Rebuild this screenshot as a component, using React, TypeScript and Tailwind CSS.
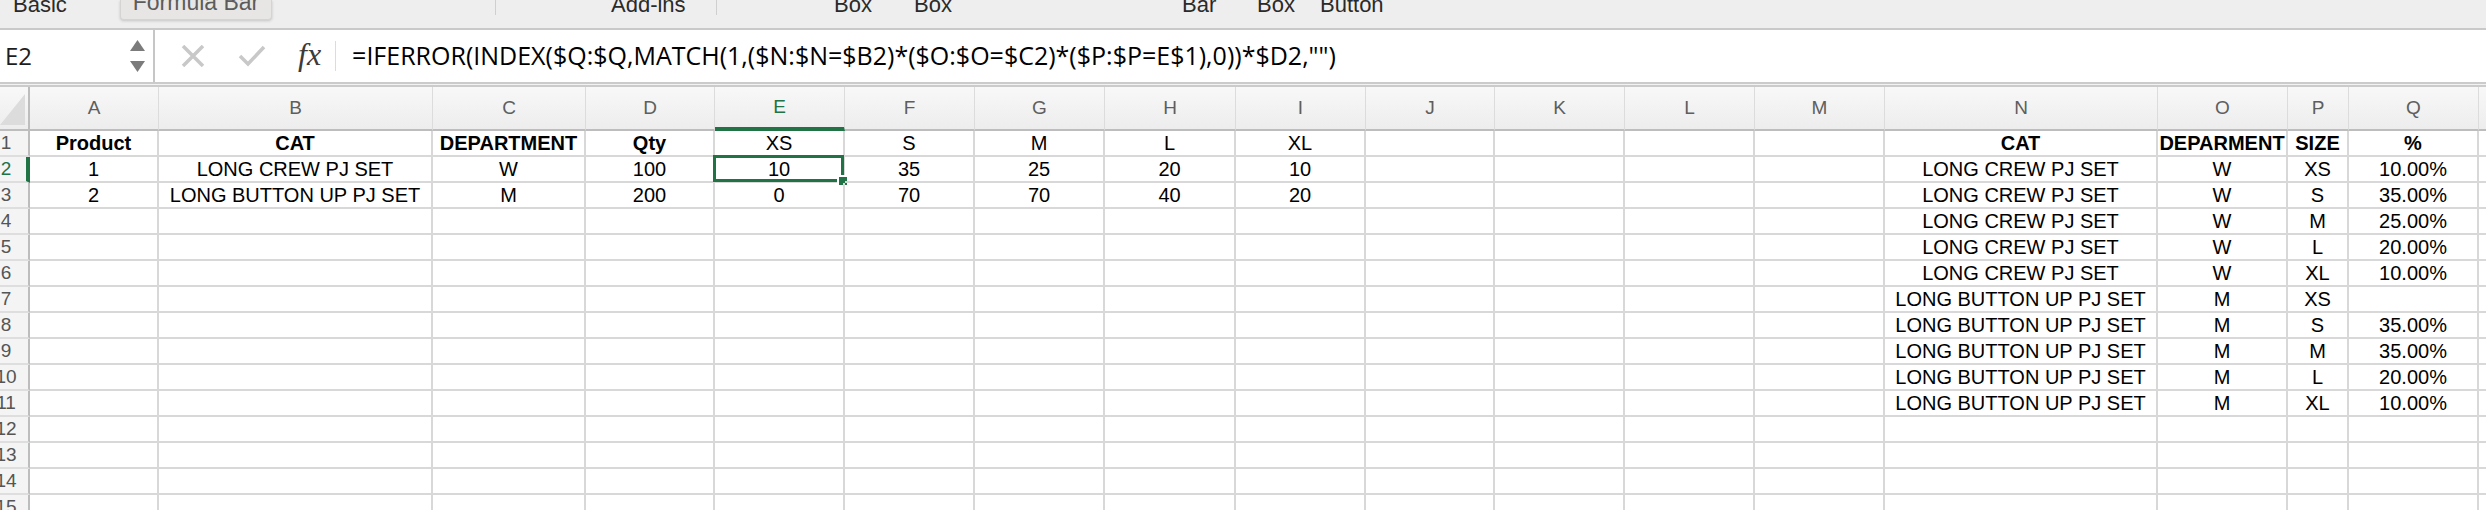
import React from 'react';

const letters = ['A', 'B', 'C', 'D', 'E', 'F', 'G', 'H', 'I', 'J', 'K', 'L', 'M', 'N', 'O', 'P', 'Q', 'R'];

// A..I block on the left
const leftTable = [
    ['Product', 'CAT', 'DEPARTMENT', 'Qty', 'XS', 'S', 'M', 'L', 'XL'],
    ['1', 'LONG CREW PJ SET', 'W', '100', '10', '35', '25', '20', '10'],
    ['2', 'LONG BUTTON UP PJ SET', 'M', '200', '0', '70', '70', '40', '20'],
];

// N..Q lookup block
const rightTable = [
    ['CAT', 'DEPARMENT', 'SIZE', '%'],
    ['LONG CREW PJ SET', 'W', 'XS', '10.00%'],
    ['LONG CREW PJ SET', 'W', 'S', '35.00%'],
    ['LONG CREW PJ SET', 'W', 'M', '25.00%'],
    ['LONG CREW PJ SET', 'W', 'L', '20.00%'],
    ['LONG CREW PJ SET', 'W', 'XL', '10.00%'],
    ['LONG BUTTON UP PJ SET', 'M', 'XS', ''],
    ['LONG BUTTON UP PJ SET', 'M', 'S', '35.00%'],
    ['LONG BUTTON UP PJ SET', 'M', 'M', '35.00%'],
    ['LONG BUTTON UP PJ SET', 'M', 'L', '20.00%'],
    ['LONG BUTTON UP PJ SET', 'M', 'XL', '10.00%'],
];

const gridCols =
    'grid grid-cols-[30px_129px_274px_153px_129px_130px_130px_130px_131px_130px_129px_130px_130px_130px_273px_130px_61px_130px_130px]';

function cellValue(r: number, c: number) {
    if (r < leftTable.length && c < 9) return leftTable[r][c];
    if (r < rightTable.length && c >= 13 && c <= 16) return rightTable[r][c - 13];
    return '';
}

function isBold(r: number, c: number) {
    return r === 0 && (c < 4 || (c >= 13 && c <= 16));
}

function Toolbar() {
    return (
        <div className="relative h-[30px] bg-[#eeeeee] border-b-2 border-[#c9c9c9] flex items-start pl-[13px] text-[22px] leading-[22px] text-[#2a2a2a] overflow-hidden">
            <div className="w-[482px] -mt-[6px]">Basic</div>
            <div className="w-[116px] h-[15px] border-l border-[#cfcfcf]" />
            <div className="w-[105px] -mt-[6px]">Add-ins</div>
            <div className="w-[118px] h-[15px] border-l border-[#cfcfcf]" />
            <div className="w-[80px] -mt-[6px]">Box</div>
            <div className="w-[268px] -mt-[6px]">Box</div>
            <div className="w-[75px] -mt-[6px]">Bar</div>
            <div className="w-[63px] -mt-[6px]">Box</div>
            <div className="-mt-[6px]">Button</div>

            {/* tooltip hovering over the ribbon */}
            <div className="absolute left-[120px] top-0 w-[152px] h-[20px] bg-[#e8e6e4] border border-t-0 border-[#d6d4d2] rounded-b-[4px] shadow-[0_1px_3px_rgba(0,0,0,0.18)] flex justify-center">
                <span className="text-[23px] leading-[22px] -mt-[9px] text-[#5c5c5c]">Formula Bar</span>
            </div>
        </div>
    );
}

function FormulaBar() {
    return (
        <div className="h-[52px] bg-white flex items-stretch">
            {/* Name box */}
            <div className="w-[155px] border-r-2 border-[#c6c6c6] flex items-center justify-between pl-[5px] pr-[8px]">
                <span className="text-[24px] text-[#1d1d1d] font-['Open_Sans',sans-serif]">E2</span>
                <div className="flex flex-col gap-[10px]">
                    <svg width="15" height="11" viewBox="0 0 15 11">
                        <path d="M7.5 0 L15 11 L0 11 Z" fill="#7b7b7b" />
                    </svg>
                    <svg width="15" height="11" viewBox="0 0 15 11">
                        <path d="M0 0 L15 0 L7.5 11 Z" fill="#7b7b7b" />
                    </svg>
                </div>
            </div>

            {/* cancel / enter / fx */}
            <div className="flex items-center pl-[26px]">
                <svg width="24" height="22" viewBox="0 0 24 22">
                    <path d="M2 1 L22 21 M22 1 L2 21" stroke="#c8c8c8" strokeWidth="3.5" />
                </svg>
                <svg className="ml-[33px]" width="28" height="22" viewBox="0 0 28 22">
                    <path d="M2 11 L10 19 L26 2" stroke="#c8c8c8" strokeWidth="3.5" fill="none" />
                </svg>
                <span className="ml-[32px] text-[32px] italic text-[#3b3b3b] font-['Liberation_Serif',serif] leading-none -mt-[4px]">
                    fx
                </span>
                <div className="ml-[14px] w-px h-[30px] bg-[#dcdcdc]" />
                <span className="ml-[16px] text-[25px] text-black font-['Open_Sans',sans-serif] whitespace-nowrap">
                    =IFERROR(INDEX($Q:$Q,MATCH(1,($N:$N=$B2)*($O:$O=$C2)*($P:$P=E$1),0))*$D2,"")
                </span>
            </div>
        </div>
    );
}

function ColumnHeaders() {
    return (
        <div className={`${gridCols} h-[44px]`}>
            <div className="relative bg-linear-to-b from-[#f8f8f8] to-[#ededed] border-r-2 border-b-2 border-[#bdbdbd]">
                <svg className="absolute left-0 bottom-[4px]" width="25" height="31" viewBox="0 0 25 31">
                    <path d="M25 0 L25 31 L0 31 Z" fill="#dcdcdc" />
                </svg>
            </div>
            {letters.map((l, i) => (
                <div
                    key={l}
                    className={`flex items-center justify-center text-[19px] bg-linear-to-b from-[#f8f8f8] to-[#ededed] border-r border-r-[#dcdcdc] ${
                        i === 4 ? 'border-b-4 border-b-[#217346] text-[#217346]' : 'border-b-2 border-b-[#bdbdbd] text-[#5e5e5e]'
                    }`}
                >
                    {l}
                </div>
            ))}
        </div>
    );
}

function Rows() {
    const rows = Array.from({ length: 15 }, (_, r) => r);
    return (
        <div className={`${gridCols} auto-rows-[26px]`}>
            {rows.map((r) => (
                <React.Fragment key={r}>
                    <div
                        className={`flex items-center overflow-hidden bg-[#f4f4f4] border-b-2 border-b-[#dedede] ${
                            r === 1 ? 'border-r-4 border-r-[#217346] text-[#217346]' : 'border-r-2 border-r-[#bdbdbd] text-[#555555]'
                        }`}
                    >
                        <div className="w-[40px] -ml-[14px] text-center text-[19px] shrink-0">{r + 1}</div>
                    </div>
                    {letters.map((_, c) => {
                        const selected = r === 1 && c === 4;
                        return (
                            <div
                                key={c}
                                className={`relative flex items-center justify-center whitespace-nowrap text-[20px] text-black border-r-2 border-b-2 border-[#d8d8d8] ${
                                    isBold(r, c) ? 'font-bold' : ''
                                }`}
                            >
                                {cellValue(r, c)}
                                {selected && (
                                    <>
                                        <div className="absolute -left-[2px] -top-[2px] -right-[1px] -bottom-[1px] border-[3px] border-[#217346]" />
                                        <div className="absolute -right-[6px] -bottom-[6px] w-[12px] h-[12px] bg-[#217346] border-2 border-white" />
                                    </>
                                )}
                            </div>
                        );
                    })}
                </React.Fragment>
            ))}
        </div>
    );
}

export default function App() {
    return (
        <div className="w-[2486px] h-[510px] overflow-hidden bg-white font-['Liberation_Sans',Arial,sans-serif]">
            <Toolbar />
            <FormulaBar />
            <div className="h-[5px] border-t-2 border-b-2 border-[#cbcbcb] bg-[#f2f2f2]" />
            <ColumnHeaders />
            <Rows />
        </div>
    );
}
